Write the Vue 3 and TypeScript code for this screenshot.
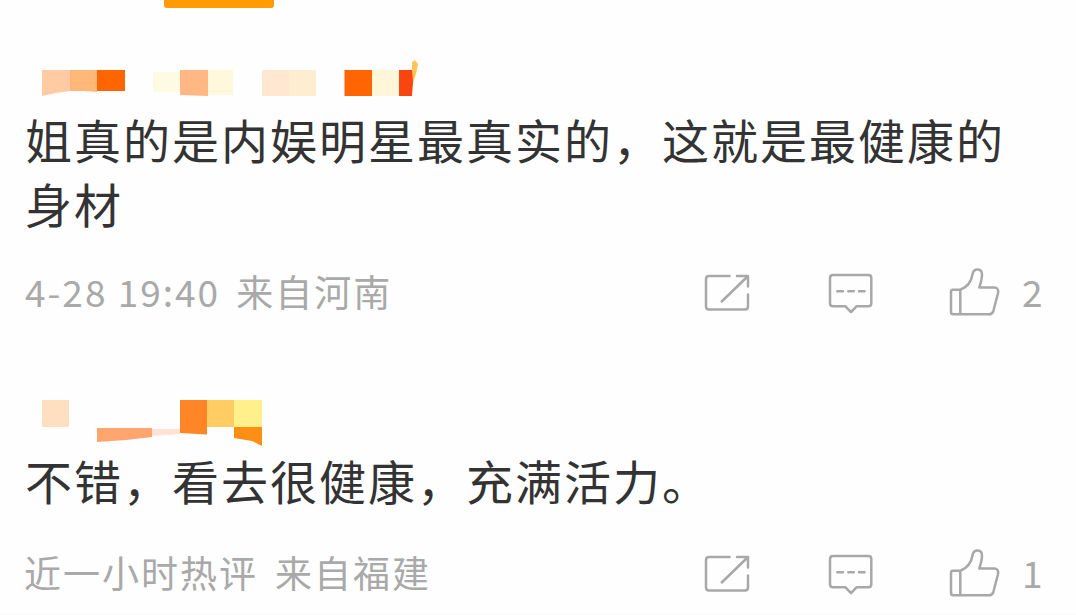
<script setup lang="ts">
interface Tile {
  points: string
  fill: string
}
interface Comment {
  id: number
  tiles: Tile[]
  lines: string[]
  time: string
  numeric: boolean
  origin: string
  likes: number
}

const comments: Comment[] = [
  {
    id: 1,
    tiles: [
      { points: '18,20 46,20 46,41 32,43 18,46', fill: '#ffcba3' },
      { points: '46,20 73,20 73,42 60,41 46,41', fill: '#ffb878' },
      { points: '73,20 101,20 101,41 73,41', fill: '#ff6500' },
      { points: '129,22 156,22 156,42 129,42', fill: '#fffbe2' },
      { points: '156,20 184,20 184,46 156,45', fill: '#ffb784' },
      { points: '184,20 209,20 209,45 184,45', fill: '#fff8dc' },
      { points: '238,20 265,20 265,46 238,46', fill: '#ffe7d1' },
      { points: '265,20 292,20 292,46 265,46', fill: '#ffedd2' },
      { points: '320.5,20 348,20 348,46 320.5,46', fill: '#ff6500' },
      { points: '348,20 375,20 375,46 348,46', fill: '#fff5d9' },
      { points: '388,20 388,12 391,10 394,14 392,24 388,36', fill: '#ffc45c' },
      { points: '375,20 388,20 389,32 388,46 375,46', fill: '#f94510' },
    ],
    lines: ['姐真的是内娱明星最真实的，这就是最健康的', '身材'],
    time: '4-28 19:40',
    numeric: true,
    origin: '来自河南',
    likes: 2,
  },
  {
    id: 2,
    tiles: [
      { points: '18,9 45,9 45,36 18,36', fill: '#ffdfbf' },
      { points: '73,37 128,37 128,46 102,49 73,51', fill: '#ffa56d' },
      { points: '128,38 156,38 156,43 128,45', fill: '#ffe2d3' },
      { points: '156,9 183,9 183,43.5 156,42', fill: '#ff8526' },
      { points: '183,9 210,9 210,36 183,36', fill: '#ffcd63' },
      { points: '210,9 238,9 238,36 210,36', fill: '#fff08b' },
      { points: '210,36 238,36 238,55 228,50 210,47', fill: '#ff8e15' },
    ],
    lines: ['不错，看去很健康，充满活力。'],
    time: '近一小时热评',
    numeric: false,
    origin: '来自福建',
    likes: 1,
  },
]
</script>

<template>
  <main class="page">
    <div class="tab-bar"><span class="tab-indicator"></span></div>
    <article v-for="c in comments" :key="c.id" class="comment">
      <svg class="name" width="420" height="57" viewBox="0 0 420 57">
        <polygon v-for="(t, i) in c.tiles" :key="i" :points="t.points" :fill="t.fill" />
      </svg>
      <div class="body">
        <p v-for="line in c.lines" :key="line">{{ line }}</p>
      </div>
      <footer class="meta">
        <span class="time" :class="{ numeric: c.numeric }">{{ c.time }}</span>
        <span class="origin">{{ c.origin }}</span>
        <div class="actions">
          <svg class="icon" width="52" height="54" viewBox="0 0 52 54">
            <path d="M27.5 9H7Q4 9 4 12V39.5Q4 42.5 7 42.5H43Q46 42.5 46 39.5V27.5M35 9H46V19.5M19.7 34.5L45 10" />
          </svg>
          <svg class="icon" width="52" height="54" viewBox="0 0 52 54">
            <path d="M7 8H42.3Q45.3 8 45.3 11V36.3Q45.3 39.3 42.3 39.3H30.5L25 45.2L19.5 39.3H7Q4 39.3 4 36.3V11Q4 8 7 8Z" />
            <path d="M11.3 24.2H17M22.3 24.2H27.8M33 24.2H38.5" />
          </svg>
          <svg class="icon like" width="56" height="54" viewBox="0 0 56 54">
            <path d="M14.3 22.7H7Q5 22.7 5 24.7V45Q5 47.3 7.3 47.3H42.5Q46.4 47.3 47.4 43.8L52 26.2Q53 20.8 48.5 20.5H33.3C34.8 16 36 12 36 7.5C36 1 28 1 26.7 6.5C25.5 14 22 20 14.3 22.7ZM14.3 22.7V47.3" />
          </svg>
          <span class="count">{{ c.likes }}</span>
        </div>
      </footer>
    </article>
  </main>
</template>

<style>
body {
  margin: 0;
  background: #fefefe;
}
</style>

<style scoped>
.page {
  box-sizing: border-box;
  height: 615px;
  overflow: hidden;
  border-bottom: 1px solid #f8f8f8;
  background: #fefefe;
  font-family: "Noto Sans CJK SC", sans-serif;
}
.tab-bar {
  height: 50px;
  padding-left: 164px;
}
.tab-indicator {
  display: block;
  width: 110px;
  height: 8px;
  border-radius: 0 0 3px 3px;
  background: #ff9b05;
}
.comment {
  padding-left: 24px;
}
.comment + .comment {
  margin-top: 70px;
}
.name {
  display: block;
}
.body {
  padding-left: 1px;
}
.body p {
  margin: 0;
  height: 64px;
  line-height: 64px;
  font-size: 47px;
  letter-spacing: 2px;
  white-space: nowrap;
  color: #333;
}
.meta {
  display: flex;
  align-items: center;
  height: 54px;
  margin-top: 32px;
  font-size: 37px;
  white-space: nowrap;
  color: #a9a9a9;
}
.comment + .comment .meta {
  margin-top: 36px;
}
.time,
.origin,
.count {
  height: 54px;
  line-height: 48px;
}
.time,
.origin {
  letter-spacing: 2px;
}
.time {
  margin-right: 17px;
}
.time.numeric {
  padding-left: 1px;
  letter-spacing: 2px;
  margin-right: 16px;
}
.actions {
  display: flex;
  align-items: center;
  width: 374px;
  margin-left: auto;
}
.icon {
  flex: none;
  margin-right: 72px;
  fill: none;
  stroke: #a8a8a8;
  stroke-width: 2.5;
  stroke-linecap: round;
  stroke-linejoin: round;
}
.icon.like {
  margin-left: -4px;
  margin-right: 20px;
}
</style>
